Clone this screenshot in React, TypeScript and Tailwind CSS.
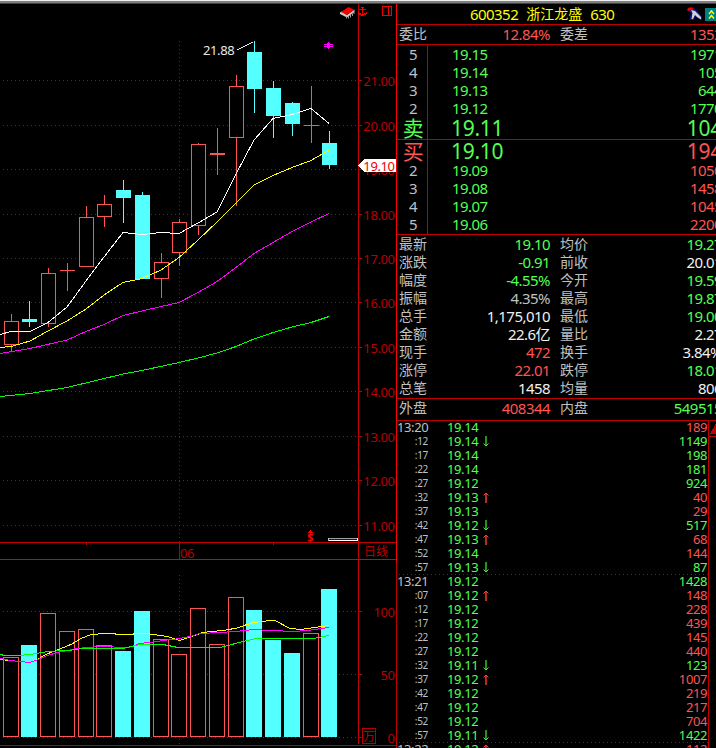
import clsx from "clsx";

type Candle = {
  x: number;
  top: number;
  bottom: number;
  high: number;
  low: number;
  up?: boolean;
};

type Tick = {
  time: string;
  price: string;
  dir?: "up" | "down";
  vol: string;
  buy?: boolean;
};

const RED = "#ff5454";
const CYAN = "#54ffff";
const AXIS = "#c00000";

// x is the wick position, the body is 7px to each side
const candles: Candle[] = [
  { x: 11, top: 321, bottom: 344, high: 314, low: 350, up: true },
  { x: 29, top: 319, bottom: 321, high: 301, low: 326 },
  { x: 48, top: 273, bottom: 323, high: 268, low: 326, up: true },
  { x: 67, top: 270, bottom: 270, high: 263, low: 290, up: true },
  { x: 86, top: 217, bottom: 266, high: 206, low: 266, up: true },
  { x: 104, top: 204, bottom: 216, high: 195, low: 226, up: true },
  { x: 123, top: 190, bottom: 197, high: 180, low: 222 },
  { x: 142, top: 195, bottom: 278, high: 192, low: 278 },
  { x: 161, top: 262, bottom: 278, high: 253, low: 297, up: true },
  { x: 179, top: 222, bottom: 252, high: 219, low: 265, up: true },
  { x: 198, top: 144, bottom: 225, high: 143, low: 234, up: true },
  { x: 217, top: 153, bottom: 154, high: 128, low: 174, up: true },
  { x: 236, top: 86, bottom: 137, high: 75, low: 205, up: true },
  { x: 254, top: 52, bottom: 88, high: 41, low: 112 },
  { x: 273, top: 88, bottom: 115, high: 81, low: 137 },
  { x: 292, top: 103, bottom: 123, high: 102, low: 135 },
  { x: 311, top: 125, bottom: 125, high: 86, low: 142, up: true },
  { x: 329, top: 143, bottom: 164, high: 131, low: 168 },
];

const volumeTops = [
  657, 645, 613, 631, 629, 645, 651, 611, 639, 654, 608, 644, 597, 610, 640,
  653, 633, 589,
];

const priceLevels = [
  { y: 80, text: "21.00" },
  { y: 125, text: "20.00" },
  { y: 169, text: "19.00" },
  { y: 214, text: "18.00" },
  { y: 258, text: "17.00" },
  { y: 302, text: "16.00" },
  { y: 347, text: "15.00" },
  { y: 391, text: "14.00" },
  { y: 436, text: "13.00" },
  { y: 480, text: "12.00" },
  { y: 525, text: "11.00" },
];

const volumeLevels = [
  { y: 611, text: "100" },
  { y: 674, text: "50" },
  { y: 737, text: "0" },
];

const priceLines = [
  {
    color: "#00ff00",
    points:
      "0,396.5 30,393.5 67,387.5 123,374 142,370.5 179,362.5 200,357.5 217,353 236,346.5 254,339 273,332.5 292,327 311,322.5 329,316.5",
  },
  {
    color: "#ff00ff",
    points:
      "0,353.5 30,348.5 67,340 86,331.5 104,324.5 123,315.5 161,306.5 179,302.5 198,292.5 217,281.5 236,267.5 254,253.5 273,242.5 292,231.5 311,222 329,213.5",
  },
  {
    color: "#ffff00",
    points:
      "0,347.5 11,346.5 30,341 48,331 67,321 86,309 104,295 123,282.5 142,278.5 161,270 179,257.5 198,240 217,222 236,203 254,185 273,175.5 292,167.5 311,160.5 329,150",
  },
  {
    color: "#ffffff",
    points:
      "0,334.5 11,331.5 30,331.5 48,322.5 67,307 86,281 104,257 123,232.5 142,234.5 161,232.5 179,233.5 198,223 217,212 236,174 254,140 273,118.5 292,114.5 311,108.5 329,123.5",
  },
];

const volumeLines = [
  {
    color: "#ffff00",
    points:
      "0,659.5 10,660.5 30,662.5 37,659.5 47,654 60,649 72,644 81,638.5 90,635 102,633.5 113,633.5 118,634.5 132,634.5 135,633.5 146,633.5 157,635 167,636.5 180,640.5 193,636 203,632.5 226,630 237,628 247,624.5 254,622.5 270,620.5 275,620.5 290,628.5 301,629.5 311,628 329,625.5",
  },
  {
    color: "#ff00ff",
    points:
      "0,658.5 10,660.5 30,662.5 37,660 47,655.5 60,652 77,648.5 93,647 105,646 118,647.5 127,648 140,643.5 153,642 167,640 180,638.5 190,636.5 200,633.5 220,632.5 235,631.5 254,629.5 270,630.5 295,631.5 311,630 329,627.5",
  },
  {
    color: "#00ff00",
    points:
      "0,654.5 5,655.5 20,655.5 33,654 48,651.5 72,650 82,648.5 95,648 125,648 140,644.5 163,644.5 178,647.5 220,647.5 228,645.5 241,642 254,639 270,638.5 313,638.5 329,635.5",
  },
];

const asks = [
  { level: "5", price: "19.15", vol: "1971" },
  { level: "4", price: "19.14", vol: "105" },
  { level: "3", price: "19.13", vol: "644" },
  { level: "2", price: "19.12", vol: "1770" },
];

const bids = [
  { level: "2", price: "19.09", vol: "1050" },
  { level: "3", price: "19.08", vol: "1458" },
  { level: "4", price: "19.07", vol: "1045" },
  { level: "5", price: "19.06", vol: "2200" },
];

const GREEN_TEXT = "text-[#54ff54]";
const RED_TEXT = "text-[#ff5454]";
const GRAY_TEXT = "text-[#c0c0c0]";
const WHITE_TEXT = "text-[#f0f0f0]";

const stats = [
  ["最新", "19.10", GREEN_TEXT, "均价", "19.27", GREEN_TEXT],
  ["涨跌", "-0.91", GREEN_TEXT, "前收", "20.01", WHITE_TEXT],
  ["幅度", "-4.55%", GREEN_TEXT, "今开", "19.59", GREEN_TEXT],
  ["振幅", "4.35%", GRAY_TEXT, "最高", "19.87", GREEN_TEXT],
  ["总手", "1,175,010", WHITE_TEXT, "最低", "19.00", GREEN_TEXT],
  ["金额", "22.6亿", WHITE_TEXT, "量比", "2.27", WHITE_TEXT],
  ["现手", "472", RED_TEXT, "换手", "3.84%", WHITE_TEXT],
  ["涨停", "22.01", RED_TEXT, "跌停", "18.01", GREEN_TEXT],
  ["总笔", "1458", WHITE_TEXT, "均量", "806", WHITE_TEXT],
];

const ticks: Tick[] = [
  { time: "13:20", price: "19.14", vol: "189", buy: true },
  { time: ":12", price: "19.14", dir: "down", vol: "1149" },
  { time: ":17", price: "19.14", vol: "198" },
  { time: ":22", price: "19.14", vol: "181" },
  { time: ":27", price: "19.12", vol: "924" },
  { time: ":32", price: "19.13", dir: "up", vol: "40", buy: true },
  { time: ":37", price: "19.13", vol: "29", buy: true },
  { time: ":42", price: "19.12", dir: "down", vol: "517" },
  { time: ":47", price: "19.13", dir: "up", vol: "68", buy: true },
  { time: ":52", price: "19.14", vol: "144", buy: true },
  { time: ":57", price: "19.13", dir: "down", vol: "87" },
  { time: "13:21", price: "19.12", vol: "1428" },
  { time: ":07", price: "19.12", dir: "up", vol: "148", buy: true },
  { time: ":12", price: "19.12", vol: "228", buy: true },
  { time: ":17", price: "19.12", vol: "439", buy: true },
  { time: ":22", price: "19.12", vol: "145", buy: true },
  { time: ":27", price: "19.12", vol: "440", buy: true },
  { time: ":32", price: "19.11", dir: "down", vol: "123" },
  { time: ":37", price: "19.12", dir: "up", vol: "1007", buy: true },
  { time: ":42", price: "19.12", vol: "219", buy: true },
  { time: ":47", price: "19.12", vol: "217", buy: true },
  { time: ":52", price: "19.12", vol: "704", buy: true },
  { time: ":57", price: "19.11", dir: "down", vol: "1422" },
  { time: "13:22", price: "19.12", dir: "up", vol: "112", buy: true },
];

function Dots({ y }: { y: number }) {
  return (
    <line
      x1="3"
      x2="357"
      y1={y + 0.5}
      y2={y + 0.5}
      stroke={AXIS}
      strokeDasharray="1 3"
    />
  );
}

function AxisLabel({ y, text }: { y: number; text: string }) {
  return (
    <>
      <rect x="359" y={y} width="3" height="1" fill={AXIS} />
      <text
        x="394.6"
        y={y + 5.5}
        textAnchor="end"
        fontSize="13"
        letterSpacing="-0.4"
        fill="#b80000"
      >
        {text}
      </text>
    </>
  );
}

function CandleShape({ c }: { c: Candle }) {
  const color = c.up ? RED : CYAN;
  const height = c.bottom - c.top + 1;
  return (
    <g>
      <rect x={c.x} y={c.high} width="1" height={c.low - c.high + 1} fill={color} />
      {c.up && height > 2 ? (
        <rect
          x={c.x - 6.5}
          y={c.top + 0.5}
          width="14"
          height={height - 1}
          fill="#000"
          stroke={color}
        />
      ) : (
        <rect x={c.x - 7} y={c.top} width="15" height={height} fill={color} />
      )}
    </g>
  );
}

function PriceChart() {
  return (
    <svg
      className="block shrink-0 overflow-visible"
      width="396"
      height="538"
      viewBox="0 4 396 538"
      shapeRendering="crispEdges"
    >
      {priceLevels.map((l) => (
        <Dots key={l.y} y={l.y} />
      ))}
      <line x1="179.5" x2="179.5" y1="41" y2="542" stroke={AXIS} strokeDasharray="1 3" />
      <rect x="358" y="4" width="1" height="538" fill={AXIS} />
      {priceLevels.map((l) => (
        <AxisLabel key={l.y} y={l.y} text={l.text} />
      ))}
      {candles.map((c) => (
        <CandleShape key={c.x} c={c} />
      ))}
      {priceLines.map((l) => (
        <polyline key={l.color} points={l.points} fill="none" stroke={l.color} />
      ))}

      {/* last price tag */}
      <path d="M358 165.5 L364 159 H396 V172 H364 Z" fill="#fff" />
      <text x="394.6" y="170.5" textAnchor="end" fontSize="13" letterSpacing="-0.4" fill="#f00000">
        19.10
      </text>

      {/* highest price */}
      <text x="203" y="55.3" fontSize="13" letterSpacing="-0.4" fill="#e8e8e8">
        21.88
      </text>
      <line x1="237" y1="50" x2="253" y2="42" stroke="#e8e8e8" />

      {/* event mark */}
      <path
        d="M328 42h1v7h-1z M324 44h9v1h-9z M324 46h9v1h-9z M327 43h3v5h-3z"
        fill="#ff00ff"
      />

      {/* toolbar icons */}
      <g shapeRendering="auto">
        <path d="M340 12.5l1.500-1 5.500 3.500 7.500-5.500v2.500l-7.500 5.500-7-3.500z" fill="#c8c8c8" />
        <path d="M341 12L348.500 7l5.700 2.700L347 15z" fill="#f80000" />
        <path
          d="M346.500 16.500v2M348.500 16v2.500M350.500 15v2.500M352.500 13.500v2.500M354 12v2"
          stroke="#989898"
        />
      </g>
      <path
        d="M361 7h3v1h-3z M362 8h1v8h-1z M359 9h7v1h-7z M358 12h1v1h-1z M366 12h1v1h-1z M358 13h3v1h-3z M364 13h3v1h-3z M359 14h7v1h-7z M361 15h3v1h-3z"
        fill="#f00000"
      />
      <path d="M382.5 6.5h9v9h-9z M388.5 6.5v9" fill="none" stroke="#f00000" />

      {/* dividend mark */}
      <path d="M310 530h1v1h1v1h1v1h-5v-1h1v-1h1z" fill="#ff0000" />
      <text x="307.3" y="541.4" fontSize="10.5" fontWeight="bold" fill="#ff0000">
        $
      </text>
      <rect x="328" y="538" width="30" height="1" fill="#a0a0a0" />
      <rect x="328" y="539" width="30" height="1" fill="#101050" />
      <rect x="328" y="540" width="30" height="1" fill="#fff" />
      <rect x="328" y="538" width="1" height="3" fill="#c0c0c0" />
      <rect x="357" y="538" width="1" height="3" fill="#fff" />
    </svg>
  );
}

function DateStrip() {
  return (
    <div className="flex h-[18px] shrink-0 border-y border-t-[#c00000] border-b-[#e00000] text-[13px] leading-4 text-[#b80000]">
      <div className="flex w-[179px] justify-center">
        <span className="h-0.5 w-px -translate-x-[3px] bg-[#c00000]" />
      </div>
      <div className="flex w-[179px] border-l border-[#c00000]">
        <span className="w-[93px] pt-0.5 tracking-[-0.4px]">06</span>
        <span className="h-0.5 w-px bg-[#c00000]" />
      </div>
      <div className="flex-1 border-l border-[#c00000] pt-px pl-[5px] text-xs leading-4">
        日线
      </div>
    </div>
  );
}

function VolumeChart() {
  return (
    <svg
      className="block shrink-0"
      width="396"
      height="188"
      viewBox="0 560 396 188"
      shapeRendering="crispEdges"
    >
      {volumeLevels.map((l) => (
        <Dots key={l.y} y={l.y} />
      ))}
      <line x1="179.5" x2="179.5" y1="575" y2="744" stroke={AXIS} strokeDasharray="1 3" />
      <rect x="358" y="560" width="1" height="184" fill={AXIS} />
      {volumeLevels.map((l) => (
        <AxisLabel key={l.y} y={l.y} text={l.text} />
      ))}
      {candles.map((c, i) => {
        const top = volumeTops[i];
        return c.up ? (
          <rect
            key={c.x}
            x={c.x - 7.5}
            y={top + 0.5}
            width="15"
            height={736 - top}
            fill="#000"
            stroke={RED}
          />
        ) : (
          <rect key={c.x} x={c.x - 8} y={top} width="16" height={737 - top} fill={CYAN} />
        );
      })}
      {volumeLines.map((l) => (
        <polyline key={l.color} points={l.points} fill="none" stroke={l.color} />
      ))}
      <rect x="362.5" y="728.5" width="13" height="15" fill="#000" stroke="#b80000" />
      <text x="363" y="741" fontSize="12" fill="#b80000">
        万
      </text>
      <rect x="0" y="745" width="396" height="1" fill={AXIS} />
    </svg>
  );
}

function LevelRow({ level, price, vol, bid }: { level: string; price: string; vol: string; bid?: boolean }) {
  return (
    <div className="flex h-[18px] items-center">
      <span className={clsx("w-8 text-center", GRAY_TEXT)}>{level}</span>
      <span className={clsx("flex-1 pl-[23px]", GREEN_TEXT)}>{price}</span>
      <span className={bid ? RED_TEXT : GREEN_TEXT}>{vol}</span>
    </div>
  );
}

function BigRow({ level, price, vol, bid }: { level: string; price: string; vol: string; bid?: boolean }) {
  return (
    <div className="flex h-5 items-center pt-0.5 text-[21px] leading-5 tracking-[-0.3px]">
      <span className={clsx("w-8 text-center", bid ? RED_TEXT : GREEN_TEXT)}>
        {level}
      </span>
      <span className={clsx("flex-1 pl-[22px]", GREEN_TEXT)}>{price}</span>
      <span className={bid ? RED_TEXT : GREEN_TEXT}>{vol}</span>
    </div>
  );
}

function StatRow({ items }: { items: string[] }) {
  const [l1, v1, c1, l2, v2, c2] = items;
  return (
    <div className="flex h-[18px] items-center pl-0.5">
      <span className="text-sm leading-[18px] tracking-normal text-[#c0c0c0]">{l1}</span>
      <span className={clsx("flex-1 text-right", c1)}>{v1}</span>
      <div className="flex w-[172px] items-center justify-between pl-2.5">
        <span className="text-sm leading-[18px] tracking-normal text-[#c0c0c0]">{l2}</span>
        <span className={c2}>{v2}</span>
      </div>
    </div>
  );
}

function Arrow({ dir }: { dir?: "up" | "down" }) {
  if (!dir) return null;
  return dir === "up" ? (
    <svg width="6" height="11" viewBox="0 0 6 11" fill="none" stroke="#ff4030">
      <path d="M3 11V1.5" strokeWidth="1.4" />
      <path d="M0.5 3.5L3 1L5.5 3.5" />
    </svg>
  ) : (
    <svg width="6" height="11" viewBox="0 0 6 11" fill="none" stroke="#30a020">
      <path d="M3 0V9.5" strokeWidth="1.8" />
      <path d="M0.5 7.5L3 10L5.5 7.5" stroke="#54e040" />
    </svg>
  );
}

function TickRow({ tick }: { tick: Tick }) {
  const full = tick.time.length > 3;
  return (
    <div className="flex h-3.5 items-center text-[13px] leading-[14px] tracking-[-0.4px]">
      <span
        className={clsx(
          "w-[31px] text-right",
          GRAY_TEXT,
          !full && "text-[10px] tracking-[-0.3px]"
        )}
      >
        {tick.time}
      </span>
      <span className={clsx("w-[55px] pl-[19px]", GREEN_TEXT)}>{tick.price}</span>
      <Arrow dir={tick.dir} />
      <span className={clsx("flex-1 text-right", tick.buy ? RED_TEXT : GREEN_TEXT)}>
        {tick.vol}
      </span>
    </div>
  );
}

// closes every minute of trades
function MinuteRule() {
  return (
    <svg className="-mb-px block" width="311" height="1" shapeRendering="crispEdges">
      <line x1="2" x2="311" y1="0.5" y2="0.5" stroke="#c00000" strokeDasharray="1 3" />
    </svg>
  );
}

function QuotePanel() {
  return (
    <div className="flex w-[325px] shrink-0 flex-col text-[15px] leading-[18px] tracking-[-0.55px]">
      <div className="flex h-[21px] items-center border-b border-[#c00000] pl-[73px] text-[#ffff00]">
        <span>600352</span>
        <span className="pl-2 text-sm tracking-normal">浙江龙盛</span>
        <span className="pl-2">630</span>
        <svg className="ml-[73px] shrink-0" width="15" height="14" viewBox="0 0 15 14">
          <path d="M1 3l6-2 3 3 5 6v3l-3-1-4-3-1 4H2l1-3 1-4z" fill="#101090" />
          <path d="M4 3l4 1 6 6v2.500L10 10 8 8l-2 4H4.500l1-6z" fill="#d0d0d0" />
          <path d="M0 2.500L2 .5h4v2L1 4z" fill="#f00000" />
        </svg>
        <svg className="ml-[3px] shrink-0" width="16" height="13" viewBox="0 0 16 13">
          <rect width="16" height="13" fill="#008080" />
          <path d="M4 6l2.500-3L9 6M4 10.500l2.500-3 2.500 3" fill="none" stroke="#ffff00" strokeWidth="1.5" />
        </svg>
      </div>
      <div className="h-5 border-b border-[#c00000]">
        <StatRow items={["委比", "12.84%", RED_TEXT, "委差", "1353", RED_TEXT]} />
      </div>
      <div className="flex h-[95px] flex-col border-b border-[#c00000] bg-[linear-gradient(#c00000,#c00000)] bg-[length:1px_100%] bg-[position:30px_0] bg-no-repeat">
        {asks.map((a) => (
          <LevelRow key={a.level} {...a} />
        ))}
        <BigRow level="卖" price="19.11" vol="104" />
      </div>
      <div className="flex h-[95px] flex-col border-b border-[#c00000] bg-[linear-gradient(#c00000,#c00000)] bg-[length:1px_100%] bg-[position:30px_0] bg-no-repeat">
        <BigRow bid level="买" price="19.10" vol="194" />
        <div className="pt-px">
          {bids.map((b) => (
            <LevelRow key={b.level} bid {...b} />
          ))}
        </div>
      </div>
      <div className="h-[164px] border-b border-[#c00000]">
        {stats.map((s) => (
          <StatRow key={s[0]} items={s} />
        ))}
      </div>
      <div className="h-[22px] border-b border-[#c00000]">
        <StatRow items={["外盘", "408344", RED_TEXT, "内盘", "549515", GREEN_TEXT]} />
      </div>
      <div className="flex h-[327px] overflow-hidden">
        <div className="-mt-px w-[311px] pr-px">
          {ticks.slice(0, 11).map((t) => (
            <TickRow key={t.time} tick={t} />
          ))}
          <MinuteRule />
          {ticks.slice(11, 23).map((t) => (
            <TickRow key={t.time} tick={t} />
          ))}
          <MinuteRule />
          <TickRow tick={ticks[23]} />
        </div>
        <div className="w-3.5 border-l border-[#c00000]">
          <div className="flex h-4 items-center border-b border-[#c00000]">
            <svg width="13" height="12" viewBox="0 0 13 12" shapeRendering="crispEdges">
              <path d="M1 11L7 0L13 11Z" fill="#c00000" />
            </svg>
          </div>
        </div>
      </div>
    </div>
  );
}

export default function App() {
  return (
    <div className="flex h-[748px] w-[716px] flex-col overflow-hidden bg-black font-['Noto_Sans','Noto_Sans_CJK_SC',sans-serif]">
      <div className="h-[3px] shrink-0 border-t border-[#f0f0f0] bg-[#808080]" />
      <div className="flex flex-1 border-t border-[#e00000]">
        <div className="flex w-[396px] shrink-0 flex-col">
          <PriceChart />
          <DateStrip />
          <VolumeChart />
        </div>
        <div className="w-px shrink-0 bg-linear-to-b from-[#ff0000] from-75% to-[#c00000] to-75%" />
        <QuotePanel />
      </div>
    </div>
  );
}
